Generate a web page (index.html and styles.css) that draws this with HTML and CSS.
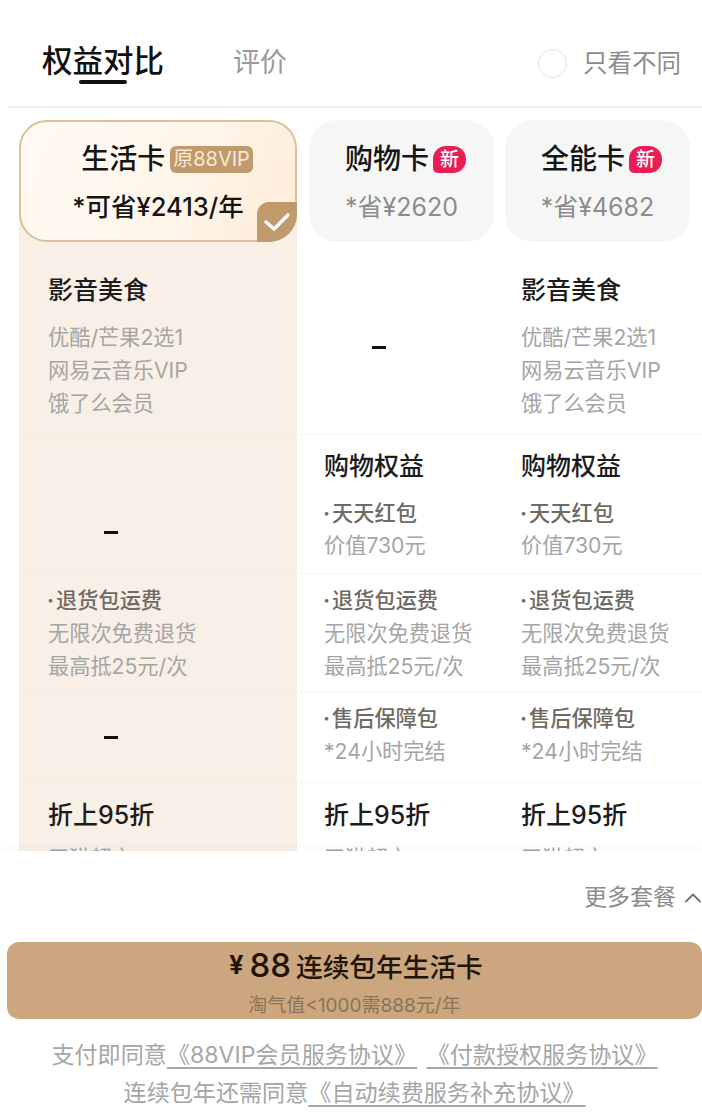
FILE: index.html
```html
<!DOCTYPE html>
<html lang="zh-CN">
<head>
<meta charset="utf-8">
<title>权益对比</title>
<link rel="stylesheet" href="styles.css">
</head>
<body>
<div class="page">
  <header class="tabs">
    <div class="tab-active">权益对比</div>
    <div class="tab">评价</div>
    <div class="only-diff"><span class="radio"></span><span>只看不同</span></div>
  </header>
  <main class="compare">
    <div class="row cards">
      <div class="card-slot first">
        <div class="card selected">
          <div class="card-title">生活卡<span class="tag-tan">原88VIP</span></div>
          <div class="card-save dark">*可省¥2413/年</div>
          <span class="corner"><svg width="28" height="22" viewBox="0 0 28 22"><path d="M3 11l8 7L25 4" fill="none" stroke="#fff" stroke-width="3.4" stroke-linecap="round" stroke-linejoin="round"/></svg></span>
        </div>
      </div>
      <div class="card-slot second">
        <div class="card plain">
          <div class="card-title">购物卡<span class="tag-new">新</span></div>
          <div class="card-save">*省¥2620</div>
        </div>
      </div>
      <div class="card-slot third">
        <div class="card plain">
          <div class="card-title">全能卡<span class="tag-new">新</span></div>
          <div class="card-save">*省¥4682</div>
        </div>
      </div>
    </div>

    <div class="row r1">
      <div class="cell c1"><div class="title">影音美食</div><div class="sub">优酷/芒果2选1</div><div class="sub">网易云音乐VIP</div><div class="sub">饿了么会员</div></div>
      <div class="cell c2"><span class="dash d-r1"></span></div>
      <div class="cell c3"><div class="title">影音美食</div><div class="sub">优酷/芒果2选1</div><div class="sub">网易云音乐VIP</div><div class="sub">饿了么会员</div></div>
    </div>

    <div class="row r2">
      <div class="cell c1"><span class="dash d-r2"></span></div>
      <div class="cell c2"><div class="title">购物权益</div><div class="point">天天红包</div><div class="sub">价值730元</div></div>
      <div class="cell c3"><div class="title">购物权益</div><div class="point">天天红包</div><div class="sub">价值730元</div></div>
    </div>

    <div class="row r3">
      <div class="cell c1"><div class="point">退货包运费</div><div class="sub">无限次免费退货</div><div class="sub">最高抵25元/次</div></div>
      <div class="cell c2"><div class="point">退货包运费</div><div class="sub">无限次免费退货</div><div class="sub">最高抵25元/次</div></div>
      <div class="cell c3"><div class="point">退货包运费</div><div class="sub">无限次免费退货</div><div class="sub">最高抵25元/次</div></div>
    </div>

    <div class="row r4">
      <div class="cell c1"><span class="dash d-r4"></span></div>
      <div class="cell c2"><div class="point">售后保障包</div><div class="sub">*24小时完结</div></div>
      <div class="cell c3"><div class="point">售后保障包</div><div class="sub">*24小时完结</div></div>
    </div>

    <div class="row r5">
      <div class="cell c1"><div class="title">折上95折</div><div class="sub">天猫超市</div></div>
      <div class="cell c2"><div class="title">折上95折</div><div class="sub">天猫超市</div></div>
      <div class="cell c3"><div class="title">折上95折</div><div class="sub">天猫超市</div></div>
    </div>
  </main>
  <footer class="footer">
    <div class="more">更多套餐<svg width="18" height="11" viewBox="0 0 18 11"><path d="M2 9.5L9 2.5l7 7" fill="none" stroke="#6f6f6f" stroke-width="1.8" stroke-linecap="round" stroke-linejoin="round"/></svg></div>
    <div class="buy">
      <div class="buy-main"><span class="yen">¥</span><span class="price">88</span><span class="buy-name">连续包年生活卡</span></div>
      <div class="buy-sub">淘气值&lt;1000需888元/年</div>
    </div>
    <div class="terms">
      <div>支付即同意<a class="link">《88VIP会员服务协议》</a> <a class="link">《付款授权服务协议》</a></div>
      <div>连续包年还需同意<a class="link">《自动续费服务补充协议》</a></div>
    </div>
  </footer>
</div>
</body>
</html>
```

FILE: styles.css
```css
* { box-sizing: border-box; }
html, body { margin: 0; padding: 0; background: #fff; }
body { font-family: Inter, "Noto Sans CJK SC", sans-serif; color: #1a1a1a; }
.page { width: 702px; height: 1120px; overflow: hidden; display: flex; flex-direction: column; }

.tabs { height: 108px; flex: none; margin-left: 8px; border-bottom: 2px solid #f0f0f0; display: flex; align-items: flex-start; padding: 0 21px 0 34px; }
.tab-active { font-size: 30.5px; font-weight: 500; line-height: 44px; margin-top: 39px; position: relative; color: #111; }
.tab-active::after { content: ""; position: absolute; left: 37px; top: 41px; width: 48px; height: 4px; border-radius: 2px; background: #111; }
.tab { font-size: 27px; line-height: 40px; margin-top: 43px; margin-left: 69px; color: #9a9a9a; }
.only-diff { margin-left: auto; margin-top: 44px; display: flex; align-items: center; gap: 16px; font-size: 24.5px; line-height: 38px; color: #8c8c8c; }
.radio { width: 29px; height: 29px; border-radius: 50%; border: 1.5px solid #e2e2e2; }

.compare { height: 743px; flex: none; overflow: hidden; padding-top: 12px; }
.row { display: grid; grid-template-columns: 297px 197px 208px; }
.cards { height: 122px; }
.card-slot.first { margin-left: 19px; background: linear-gradient(#fff 70%, #f8f0e6 70%); }
.card-slot.second { padding-left: 12px; }
.card-slot.third { padding: 0 12px 0 11px; }
.card { height: 122px; border-radius: 28px; display: flex; flex-direction: column; align-items: center; position: relative; }
.card.selected { border: 2px solid #dcc09a; background: linear-gradient(115deg, #fffaf3 0%, #fff6ea 55%, #feecd9 100%); padding-top: 16px; }
.card.plain { background: #f6f6f6; padding-top: 18px; }
.card-title { display: flex; align-items: center; font-size: 28px; font-weight: 500; line-height: 42px; color: #151515; }
.selected .card-title { padding-left: 18px; }
.plain .card-title { padding-left: 8px; }
.tag-tan { margin-left: 5px; height: 27px; padding: 0 3px; border-radius: 6px; background: #c09a6c; color: #fbe9d3; font-size: 20px; font-weight: 400; line-height: 27px; white-space: nowrap; }
.tag-new { margin-left: 4px; width: 33px; height: 27px; border-radius: 13px 13px 13px 5px; background: #ea1e55; color: #fff; font-size: 19px; font-weight: 500; line-height: 27px; text-align: center; }
.card-save { margin-top: 9px; font-size: 25px; line-height: 36px; color: #8c8c8c; white-space: nowrap; }
.card-save.dark { color: #151515; font-size: 25.5px; font-weight: 500; margin-top: 9px; }
.corner { position: absolute; right: -2px; bottom: -2px; width: 40px; height: 40px; border-radius: 12px 0 28px 0; background: #c09a6c; display: flex; align-items: center; justify-content: center; }

.r1 { height: 192px; }
.r2 { height: 139px; }
.r3 { height: 118px; }
.r4 { height: 91px; }
.r5 { height: 120px; }
.cell { padding-left: 27px; border-top: 1.5px solid #f6f6f6; }
.cards + .r1 .cell { border-top: 0; }
.c1 { margin-left: 19px; padding-left: 29px; background: #f8f0e6; border-top-color: #f5ebdf; }
.r1 .cell { padding-top: 30px; }
.r2 .cell { padding-top: 13px; }
.r3 .cell { padding-top: 10px; }
.r4 .cell { padding-top: 10px; }
.r5 .cell { padding-top: 14px; }
.title { font-size: 25px; font-weight: 500; line-height: 36px; margin-bottom: 13px; color: #1c1c1c; white-space: nowrap; }
.r5 .title { margin-bottom: 9px; }
.sub { font-size: 21.2px; line-height: 33px; color: #a5a5a5; white-space: nowrap; }
.r2 .sub { margin-top: -1px; }
.point { font-size: 21.2px; font-weight: 500; line-height: 33px; color: #6f6a63; white-space: nowrap; }
.point::before { content: "·"; font-weight: 700; margin: 0 2px 0 -1px; }
.dash { display: block; width: 14px; height: 2.5px; background: #111; }
.d-r1 { margin: 74px 0 0 48px; }
.d-r2 { margin: 83px 0 0 56px; }
.d-r4 { margin: 34px 0 0 56px; }

.footer { flex: 1; background: #fff; box-shadow: 0 -6px 10px rgba(0,0,0,.018); position: relative; }
.more { position: absolute; right: 0; top: 28px; display: flex; align-items: center; gap: 8px; font-size: 23px; line-height: 36px; color: #8c8c8c; }
.buy { position: absolute; left: 7px; right: 0; top: 91px; height: 77px; border-radius: 12px; background: #cca67f; display: flex; flex-direction: column; align-items: center; }
.buy-main { display: flex; align-items: center; height: 44px; margin-top: 1px; padding-left: 3px; color: #21150a; }
.yen { font-size: 25px; font-weight: 700; }
.price { font-size: 33px; font-weight: 500; margin: 0 5px 0 6px; }
.buy-name { font-size: 26.7px; font-weight: 500; }
.buy-sub { font-size: 19px; line-height: 24px; margin-top: 7px; color: #8b7358; }
.terms { position: absolute; left: 0; right: 0; top: 185px; padding-left: 7px; text-align: center; font-size: 23.1px; line-height: 38px; word-spacing: 3px; color: #a6a6a6; }
.link { text-decoration: underline; text-underline-offset: 4px; text-decoration-thickness: 1.5px; }
```
